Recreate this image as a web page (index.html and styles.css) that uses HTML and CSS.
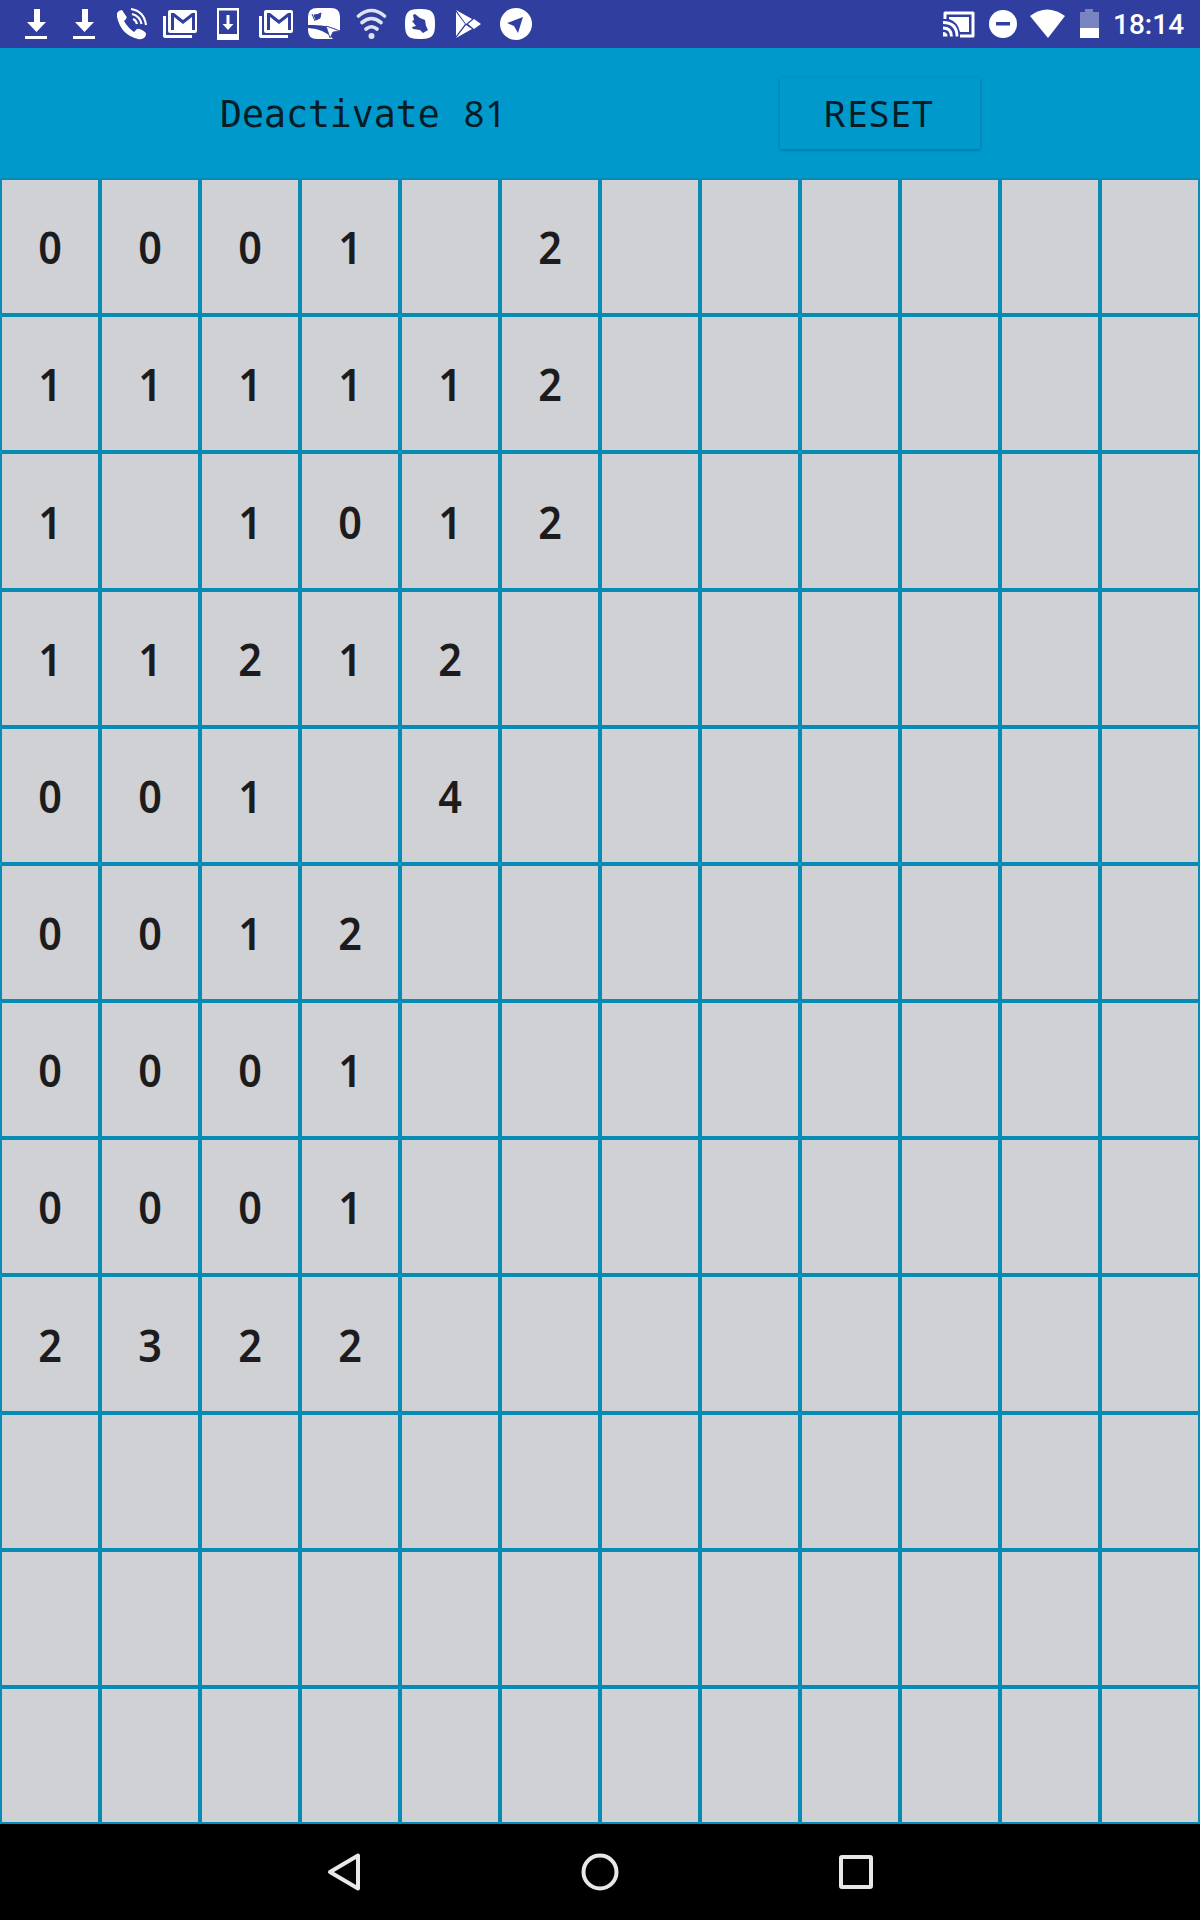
FILE: index.html
```html
<!DOCTYPE html>
<html lang="en">
<head>
<meta charset="utf-8">
<title>Deactivate</title>
<link rel="stylesheet" href="styles.css">
</head>
<body>
<header class="status">
<svg class="icons-left" width="540" height="48" viewBox="0 0 540 48" fill="#fff">
<path d="M34 9h6v13h6L36.500 32 27 22h7zM25 36h22v3H25z"/>
<path d="M82 9h6v13h6L84.500 32 75 22h7zM73 36h22v3H73z"/>
<path d="M117 13Q119 10 122 10L126 16Q128 18 124 21Q128 28 134 32L137 29Q139 28 145 32Q147 34 145 37Q142 40 138 39Q121 35 117 17z"/>
<path d="M131 9Q144 11 146 25M132 14Q140 16 141.500 24M133 19Q136 20 137 24" fill="none" stroke="#fff" stroke-width="2.200"/>
<g id="mail"><path fill-rule="evenodd" d="M170 10h25q2 0 2 2v19q0 2-2 2h-25q-2 0-2-2V12q0-2 2-2zM171 13v17h3V17l9 7 9-7v13h3V13h-3l-9 7-9-7z"/><path d="M163 16h3v19h26v3h-27q-2 0-2-2z"/></g>
<path fill-rule="evenodd" d="M217 8h22v32h-22zM219 10.500v23.500h18V10.500zM226.500 15h3v9h4l-5.500 6-5.500-6h4z"/>
<use href="#mail" x="96"/>
<path d="M317 8h14q9 0 9 9v14q-11-7-32-6V17q0-9 9-9zM308 28q17 1 25 11h-16q-9 0-9-9z"/>
<path d="M312 14l3 7M314 15q4 0 7-2l-1 5-4 2z" fill="#303f9f" stroke="#303f9f" stroke-width="1"/>
<path d="M326 26l14 5-7 1-3 6z" stroke="#303f9f" stroke-width=".8"/>
<g class="soft"><path fill="none" stroke="#fff" stroke-width="3.600" stroke-linecap="round" d="M358.500 16q13-11 26 0M362 22.500q9.500-8 19 0M366 29q5.500-4.500 11 0"/><circle cx="371.500" cy="36" r="3"/></g>
<path d="M420 9c12 0 15 3 15 15s-3 15-15 15-15-3-15-15 3-15 15-15z"/>
<path fill="#303f9f" d="M413 15l2-1 5 4 5 2 1 6 2 4-5 3-3-3-7-1-1-2 4-1-4-5 2-1z"/>
<path d="M456 10l16 9-6 5zM456 12l9 12-9 12zM472 29l-16 9 10-13zM474 19l7 5-7 5-6-5z"/>
<circle cx="516" cy="24" r="16"/><path fill="#303f9f" d="M523 17l-5 16-4-7-7-3z"/>
</svg>
<svg class="icons-right" width="184" height="48" viewBox="930 0 184 48" fill="#fff">
<path d="M945 19v-6h28v23h-13" fill="none" stroke="#fff" stroke-width="3" stroke-linejoin="round"/>
<path d="M949 17h20v15h-9q-2-10-11-13z"/>
<path d="M943 22.500q14 0 14 14M943 28q8.500 0 8.500 8.500" fill="none" stroke="#fff" stroke-width="2.800"/><path d="M943 32q4.500 0 4.500 4.500H943z"/>
<circle cx="1003" cy="24" r="14"/><path fill="#303f9f" d="M996 22h14v3.500h-14z"/>
<path d="M1030 16q17-13 35 0L1048 38z"/>
<path fill="#7a83c2" d="M1080 12h5V9h8v3h6v16h-19z"/><path d="M1080 28h19v10h-19z"/>
</svg>
<span class="clock">18:14</span>
</header>
<div class="toolbar">
<div class="count"><span class="label">Deactivate</span> <span class="number">81</span></div>
<button class="reset">RESET</button>
</div>
<main class="board" id="board"></main>
<nav class="nav">
<svg width="1200" height="96" viewBox="0 0 1200 96" fill="none" stroke="#e8e8e8" stroke-width="4" stroke-linejoin="round"><path d="M330 48L358 31.500V64.500z"/><circle cx="600" cy="48" r="16.500"/><rect x="841" y="33" width="30" height="30" rx="1"/></svg>
</nav>
<script src="board.js"></script>
</body>
</html>
```
FILE: styles.css
```css
* { box-sizing: border-box; }
body { margin: 0; width: 1200px; height: 1920px; background: #0099cc; display: flex; flex-direction: column; }
svg { display: block; }
.status { height: 48px; background: #303f9f; display: flex; align-items: center; color: #fff; }
.icons-right { margin-left: 390px; flex: none; }
.icons-left { flex: none; }
.soft { opacity: .85; }
.clock { margin-left: -1px; padding-top: 2px; font: 500 28px/46px Roboto, sans-serif; }
.toolbar { height: 130px; display: flex; align-items: center; justify-content: space-between; padding: 0 220px 0 220px; color: #031c25; }
.count { padding-top: 2px; font: 36.500px/50px "DejaVu Sans Mono", monospace; white-space: pre; }
.number { margin-left: 2px; font-family: "Noto Sans", sans-serif; font-size: 36px; letter-spacing: 1.200px; }
.reset { width: 200px; height: 71px; padding: 0 3px 0 0; border: 0; background: #0099cc; color: inherit; font: 36.500px/69px "Noto Sans", sans-serif; letter-spacing: 1.500px; box-shadow: 0 1px 3px rgba(0, 40, 60, .4); }
.board { display: grid; grid-template-columns: repeat(12, 100px); grid-template-rows: 137px 137px 138px repeat(5, 137px) 138px repeat(3, 137px); }
.cell { border: 2px solid #078ab3; background: #d0d1d5; color: #1c1c1e; display: flex; align-items: center; justify-content: center; font: 600 45.500px/61px "Noto Sans", sans-serif; }
.digit { transform: scaleX(.91); }
.nav { height: 96px; background: #000; }
```
FILE: board.js
```js
const rows = ["0001 2", "111112", "1 1012", "11212", "001 4", "0012", "0001", "0001", "2322", "", "", ""];
const board = document.getElementById("board");
for (const row of rows) {
  for (const value of row.padEnd(12)) {
    const cell = document.createElement("div");
    cell.className = "cell";
    if (value !== " ") {
      const digit = document.createElement("span");
      digit.className = "digit";
      digit.textContent = value;
      cell.append(digit);
    }
    board.append(cell);
  }
}
```
